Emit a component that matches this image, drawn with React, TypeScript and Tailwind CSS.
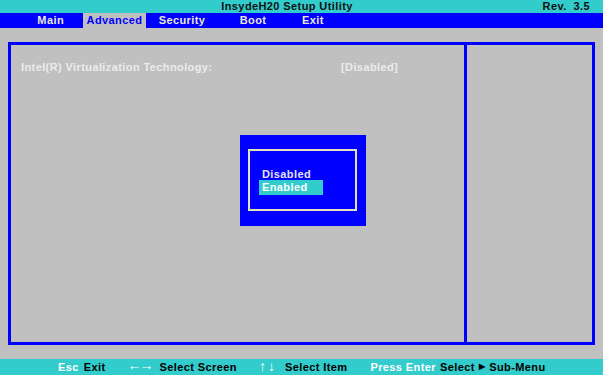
const FONT = { fontFamily: '"Liberation Sans", Arial, sans-serif' };

const tabs = [
  { label: "Main", w: "w-[83px]", pad: "pr-[19px]", justify: "justify-end" },
  { label: "Advanced", w: "w-[63px]", active: true },
  { label: "Security", w: "w-[72px]" },
  { label: "Boot", w: "w-[70px]" },
  { label: "Exit", w: "w-[50px]" },
];

export default function App() {
  return (
    <div
      className="w-[603px] h-[375px] flex flex-col bg-[#c0c0c0] overflow-hidden text-[11px] font-bold tracking-[0.4px]"
      style={FONT}
    >
      {/* title bar */}
      <div className="h-[13px] bg-[#33cccc] flex items-center text-[#101010] leading-none relative">
        <span className="flex-1 text-center pr-[29px]">InsydeH20 Setup Utility</span>
        <span className="absolute right-[13px] top-[1px]">Rev.&nbsp;&nbsp;3.5</span>
      </div>

      {/* tab bar */}
      <div className="h-[15px] bg-[#0000ff] flex leading-none">
        {tabs.map((t) => (
          <div
            key={t.label}
            className={`${t.w} h-full flex items-center ${t.justify ?? "justify-center"} ${t.pad ?? ""} ${
              t.active ? "bg-[#c0c0c0] text-[#0000ff]" : "text-[#e8e8d8]"
            }`}
          >
            {t.label}
          </div>
        ))}
      </div>

      {/* main area */}
      <div className="flex-1 px-[8px] py-[14px] flex">
        <div className="flex-1 flex border-[3px] border-[#0000ff]">
          <div className="relative w-[456px] border-r-[3px] border-[#0000ff] text-[#ececec]">
            <div className="flex pt-[17px] pl-[10px] leading-none">
              <span className="w-[320px]">Intel(R) Virtualization Technology:</span>
              <span>[Disabled]</span>
            </div>

            {/* option popup */}
            <div className="absolute left-[229px] top-[90px] w-[126px] h-[91px] bg-[#0000ff] pl-[8px] pr-[9px] pt-[14px] pb-[15px]">
              <div className="w-full h-full border-2 border-[#e4e0c4] pt-[15px] pl-[9px] leading-none">
                <div className="h-[14px] flex items-center pt-[2px] pl-[3px] text-[#e4e4f4]">Disabled</div>
                <div className="h-[15px] w-[64px] flex items-center pl-[3px] bg-[#33cccc] text-white">Enabled</div>
              </div>
            </div>
          </div>
          <div className="flex-1" />
        </div>
      </div>

      {/* status bar */}
      <div className="h-[16px] bg-[#33cccc] flex items-center leading-none text-black">
        <span className="ml-[58px] text-white">Esc</span>
        <span className="ml-[5px]">Exit</span>
        <span className="ml-[22px] text-white text-[14px] tracking-[-2px] -translate-y-[2px]">←→</span>
        <span className="ml-[8px]">Select Screen</span>
        <span className="ml-[22px] text-white text-[14px] tracking-[2px] -translate-y-[1px]">↑↓</span>
        <span className="ml-[8px]">Select Item</span>
        <span className="ml-[23px] text-white">Press Enter</span>
        <span className="ml-[4px]">Select</span>
        <span className="ml-[4px] text-[8px]">▶</span>
        <span className="ml-[4px]">Sub-Menu</span>
      </div>
    </div>
  );
}
